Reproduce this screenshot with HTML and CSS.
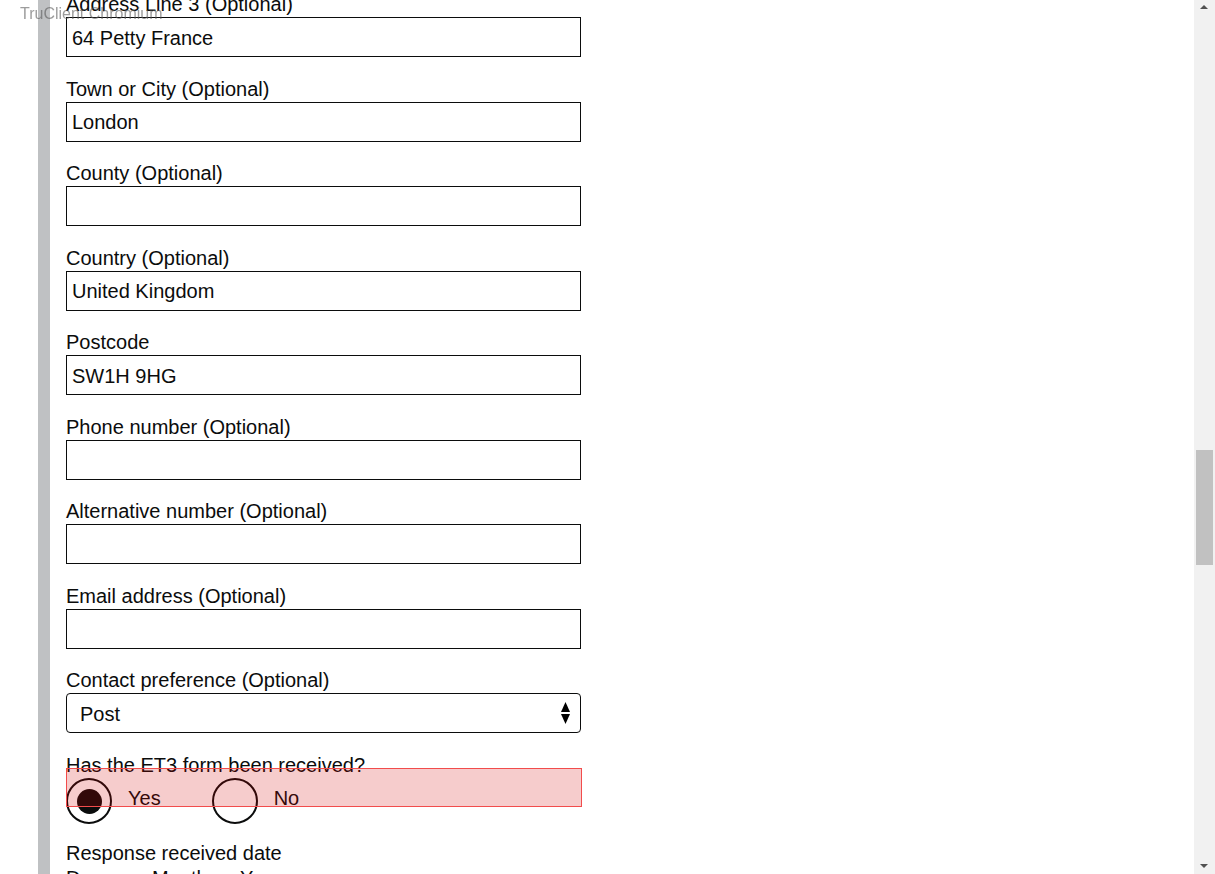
FILE: index.html
```html
<!DOCTYPE html>
<html lang="en">
<head>
<meta charset="utf-8">
<title>Respondent details</title>
<link rel="stylesheet" href="styles.css">
</head>
<body>
<div class="watermark">TruClient Chromium</div>
<div class="page">
  <form class="form">
    <div class="group">
      <label class="label">Address Line 3 (Optional)</label>
      <input class="input" type="text" value="64 Petty France">
    </div>
    <div class="group">
      <label class="label">Town or City (Optional)</label>
      <input class="input" type="text" value="London">
    </div>
    <div class="group">
      <label class="label">County (Optional)</label>
      <input class="input" type="text" value="">
    </div>
    <div class="group">
      <label class="label">Country (Optional)</label>
      <input class="input" type="text" value="United Kingdom">
    </div>
    <div class="group">
      <label class="label">Postcode</label>
      <input class="input" type="text" value="SW1H 9HG">
    </div>
    <div class="group">
      <label class="label">Phone number (Optional)</label>
      <input class="input" type="text" value="">
    </div>
    <div class="group">
      <label class="label">Alternative number (Optional)</label>
      <input class="input" type="text" value="">
    </div>
    <div class="group">
      <label class="label">Email address (Optional)</label>
      <input class="input" type="text" value="">
    </div>
    <div class="group">
      <label class="label">Contact preference (Optional)</label>
      <div class="select-wrap">
        <select class="select"><option>Post</option><option>Email</option></select>
        <svg class="select-arrow" width="9" height="24" viewBox="0 0 9 24"><polygon points="0,11 4.5,1 9,11" fill="#000"/><polygon points="0,13 4.5,23 9,13" fill="#000"/></svg>
      </div>
    </div>
    <div class="group radio-group">
      <div class="label">Has the ET3 form been received?</div>
      <div class="radios">
        <div class="radio-item">
          <span class="radio-circle checked"><span class="radio-dot"></span></span>
          <span class="radio-label">Yes</span>
        </div>
        <div class="radio-item">
          <span class="radio-circle"></span>
          <span class="radio-label">No</span>
        </div>
        <div class="highlight"></div>
      </div>
    </div>
    <div class="group">
      <div class="label">Response received date</div>
      <div class="date-row">
        <span class="date-item day">Day</span>
        <span class="date-item month">Month</span>
        <span class="date-item year">Year</span>
      </div>
    </div>
  </form>
</div>
<div class="scrollbar">
  <div class="sb-arrow sb-up"></div>
  <div class="sb-thumb"></div>
  <div class="sb-arrow sb-down"></div>
</div>
</body>
</html>
```

FILE: styles.css
```css
html, body {
  margin: 0;
  padding: 0;
  height: 874px;
  overflow: hidden;
  background: #fff;
}
body {
  font-family: "Liberation Sans", Arial, sans-serif;
  color: #0b0c0c;
  width: 1194px;
}
.watermark {
  position: fixed;
  left: 20px;
  top: 4px;
  font-size: 16px;
  line-height: 20px;
  color: rgba(90, 90, 90, 0.6);
  z-index: 10;
  pointer-events: none;
}
.page {
  margin-left: 38px;
  border-left: 12px solid #bfc1c3;
  padding-left: 16px;
  min-height: 900px;
}
.form {
  width: 515px;
  margin-top: -8px;
}
.group {
  margin-bottom: 19.5px;
}
.label {
  display: block;
  font-size: 20px;
  line-height: 25px;
}
.input {
  display: block;
  box-sizing: border-box;
  width: 515px;
  height: 40px;
  margin: 0;
  border: 1px solid #0b0c0c;
  border-radius: 0;
  padding: 2px 5px 0;
  font-family: "Liberation Sans", Arial, sans-serif;
  font-size: 20px;
  color: #0b0c0c;
  background: #fff;
  outline: none;
}
.select-wrap {
  position: relative;
  width: 515px;
}
.select {
  display: block;
  box-sizing: border-box;
  width: 515px;
  height: 40px;
  margin: 0;
  border: 1px solid #0b0c0c;
  border-radius: 4px;
  padding: 2px 30px 0 13px;
  font-family: "Liberation Sans", Arial, sans-serif;
  font-size: 20px;
  color: #0b0c0c;
  background: #fff;
  appearance: none;
  -webkit-appearance: none;
}
.select-arrow {
  position: absolute;
  right: 11px;
  top: 8px;
}
.radio-group {
  margin-bottom: 15.5px;
}
.radios {
  position: relative;
  display: flex;
  height: 48px;
  align-items: flex-start;
}
.radio-item {
  display: flex;
  align-items: center;
  margin-top: 0.5px;
  margin-right: 20px;
}
.radio-circle {
  box-sizing: border-box;
  width: 46px;
  height: 46px;
  border: 2px solid #0b0c0c;
  border-radius: 50%;
  display: flex;
  align-items: center;
  justify-content: center;
  background: #fff;
}
.radio-dot {
  width: 25px;
  height: 25px;
  border-radius: 50%;
  background: #0b0c0c;
}
.radio-label {
  font-size: 20px;
  line-height: 25px;
  margin-left: 16px;
  padding-right: 31px;
  padding-bottom: 6px;
}
.highlight {
  position: absolute;
  left: 0;
  top: -10px;
  width: 516px;
  height: 39px;
  box-sizing: border-box;
  border: 1px solid #f24c4c;
  background: rgba(210, 0, 0, 0.2);
}
.date-row {
  display: flex;
  font-size: 20px;
  line-height: 25px;
}
.date-item.day { width: 86px; }
.date-item.month { width: 88px; }
.scrollbar {
  position: fixed;
  top: 0;
  right: 0;
  width: 21px;
  height: 874px;
  background: #f1f1f1;
}
.sb-thumb {
  position: absolute;
  left: 2px;
  top: 450px;
  width: 17px;
  height: 115px;
  background: #c1c1c1;
}
.sb-arrow {
  position: absolute;
  left: 6px;
  width: 0;
  height: 0;
  border-left: 4.5px solid transparent;
  border-right: 4.5px solid transparent;
}
.sb-up {
  top: 5px;
  border-bottom: 4px solid #505050;
}
.sb-down {
  bottom: 6px;
  border-top: 4px solid #505050;
}
```
